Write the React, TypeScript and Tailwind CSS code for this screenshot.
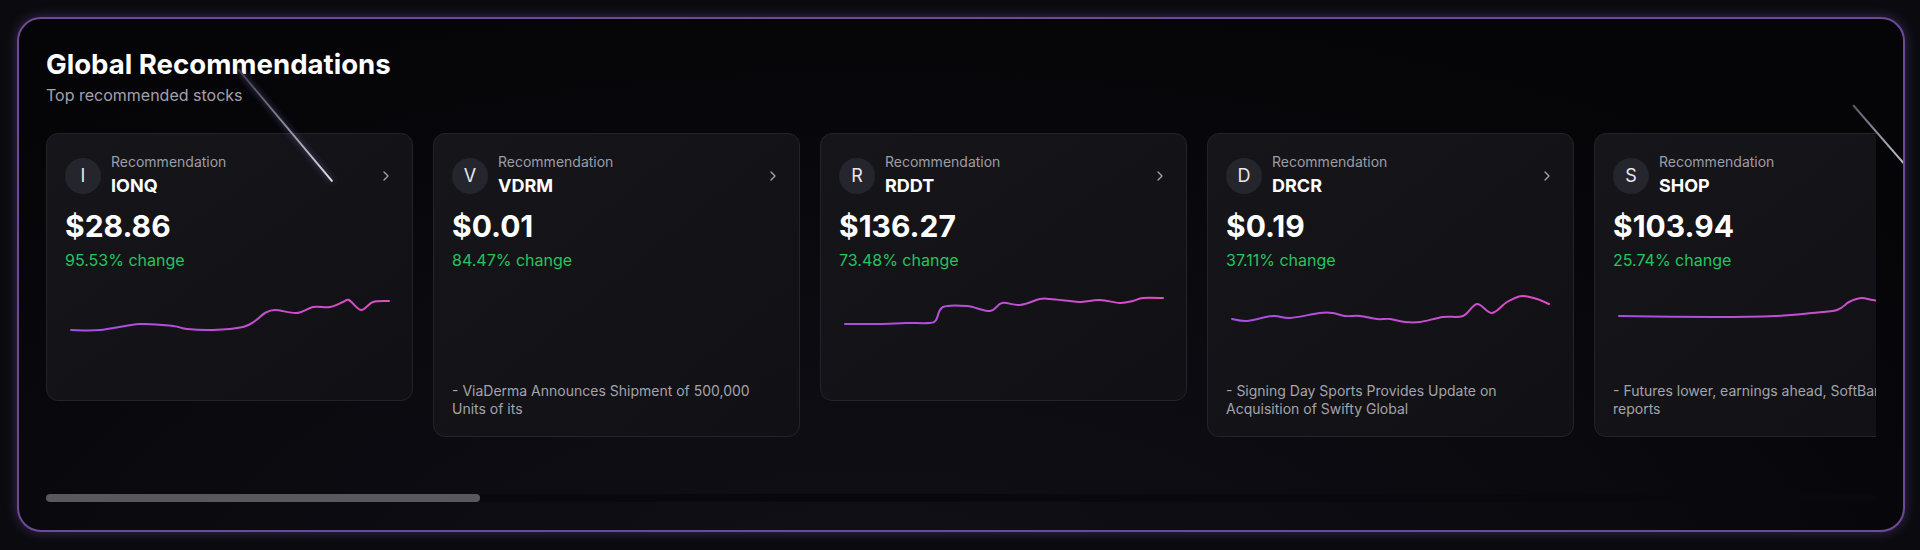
import { ChevronRight } from "lucide-react";

type Pt = [number, number];

type Rec = {
  ticker: string;
  price: string;
  change: string;
  points: Pt[];
  news?: string;
};

const RECS: Rec[] = [
  {
    ticker: "IONQ",
    price: "$28.86",
    change: "95.53% change",
    points: [
      [6, 58], [35, 58], [75, 52], [108, 54], [122, 57], [148, 58], [178, 55], [190, 49],
      [200, 41], [210, 38], [232, 41], [248, 35], [265, 35], [278, 30], [284, 28], [296, 38],
      [308, 30], [324, 29],
    ],
  },
  {
    ticker: "VDRM",
    price: "$0.01",
    change: "84.47% change",
    points: [],
    news: "- ViaDerma Announces Shipment of 500,000 Units of its",
  },
  {
    ticker: "RDDT",
    price: "$136.27",
    change: "73.48% change",
    points: [
      [6, 52], [40, 52], [67, 51], [90, 51], [97, 48], [104, 35], [128, 34], [151, 39],
      [163, 31], [181, 33], [201, 27], [211, 27], [231, 29], [241, 30], [261, 28], [281, 31],
      [294, 29], [304, 26], [324, 26],
    ],
  },
  {
    ticker: "DRCR",
    price: "$0.19",
    change: "37.11% change",
    points: [
      [6, 47], [21, 49], [47, 44], [64, 46], [94, 41], [107, 41], [119, 44], [134, 44],
      [151, 47], [164, 47], [179, 50], [194, 50], [217, 45], [237, 44], [251, 32], [266, 41],
      [281, 30], [296, 24], [311, 27], [323, 32],
    ],
    news: "- Signing Day Sports Provides Update on Acquisition of Swifty Global",
  },
  {
    ticker: "SHOP",
    price: "$103.94",
    change: "25.74% change",
    points: [
      [6, 44], [101, 45], [163, 44], [199, 41], [224, 38], [236, 30], [248, 26], [260, 28],
      [277, 30], [297, 28], [323, 31],
    ],
    news: "- Futures lower, earnings ahead, SoftBank stake reports",
  },
];

// smooth path through points (catmull-rom -> bezier)
function smoothPath(pts: Pt[]) {
  if (pts.length < 2) return "";
  let d = `M${pts[0][0]},${pts[0][1]}`;
  for (let i = 0; i < pts.length - 1; i++) {
    const p0 = pts[i - 1] || pts[i];
    const p1 = pts[i];
    const p2 = pts[i + 1];
    const p3 = pts[i + 2] || p2;
    const c1x = p1[0] + (p2[0] - p0[0]) / 6;
    const c1y = p1[1] + (p2[1] - p0[1]) / 6;
    const c2x = p2[0] - (p3[0] - p1[0]) / 6;
    const c2y = p2[1] - (p3[1] - p1[1]) / 6;
    d += ` C${c1x},${c1y} ${c2x},${c2y} ${p2[0]},${p2[1]}`;
  }
  return d;
}

function Sparkline({ points, id }: { points: Pt[]; id: string }) {
  return (
    <div className="h-[110px] w-full">
      {points.length > 0 && (
        <svg width="329" height="110" viewBox="0 0 329 110" fill="none">
          <defs>
            <linearGradient id={id} x1="0" y1="0" x2="329" y2="0" gradientUnits="userSpaceOnUse">
              <stop offset="0%" stopColor="#a24fe6" />
              <stop offset="100%" stopColor="#e04cc4" />
            </linearGradient>
          </defs>
          <path
            d={smoothPath(points)}
            stroke={`url(#${id})`}
            strokeWidth="2"
            strokeLinecap="round"
            strokeLinejoin="round"
          />
        </svg>
      )}
    </div>
  );
}

function RecCard({ rec }: { rec: Rec }) {
  return (
    <div className="w-[367px] shrink-0 rounded-xl border border-[#232329] bg-[#121217] bg-gradient-to-br from-[#15151a] to-[#111115] p-[18px]">
      <div className="flex items-center justify-between">
        <div className="flex items-center gap-2.5">
          <div className="flex h-9 w-9 items-center justify-center rounded-full bg-[#25252d] text-lg text-[#e8e8ec]">
            {rec.ticker[0]}
          </div>
          <div>
            <p className="text-sm leading-5 text-[#9d9da6]">Recommendation</p>
            <p className="text-lg leading-7 font-bold text-white">{rec.ticker}</p>
          </div>
        </div>
        <ChevronRight size={16} className="text-[#a1a1aa]" />
      </div>
      <p className="mt-2 text-3xl leading-9 font-bold text-white">{rec.price}</p>
      <p className="mt-1 text-base leading-6 text-[#22c55e]">{rec.change}</p>
      <Sparkline points={rec.points} id={`grad-${rec.ticker}`} />
      {rec.news && <p className="text-sm leading-[18px] text-[#a3a3ab]">{rec.news}</p>}
    </div>
  );
}

export default function App() {
  return (
    <div
      className="h-[550px] w-[1920px] overflow-hidden bg-[#0b0b0f] pl-[17px] pr-[15px] pt-[17px]"
      style={{ fontFamily: "Inter, 'Noto Sans', sans-serif" }}
    >
      <section className="relative overflow-hidden rounded-3xl border-2 border-[#6c4a98] bg-[#06060a] bg-[radial-gradient(ellipse_70%_120%_at_45%_115%,#101016_0%,#0a0a0f_55%,#050508_100%)] px-[27px] pt-[28px] pb-[28px] shadow-[0_0_12px_rgba(130,90,190,0.4)]">
        <h2 className="text-[27.6px] leading-[34px] font-bold text-white">Global Recommendations</h2>
        <p className="mt-0.5 text-base leading-6 text-[#a1a1aa]">Top recommended stocks</p>

        <div className="mt-[26px] flex items-start gap-5 overflow-hidden">
          {RECS.map((r) => (
            <RecCard key={r.ticker} rec={r} />
          ))}
        </div>

        <div className="mt-[57px] h-2 w-full rounded-full bg-[#09090d]">
          <div className="h-2 w-[434px] rounded-full bg-[#58585d]" />
        </div>

        {/* meteors */}
        <div className="pointer-events-none absolute left-[219px] top-[49px] h-[2px] w-[147px] origin-left rotate-[50deg] rounded-full bg-gradient-to-r from-[#3c3c4c] via-[#8a8a9c] to-[#e2e2ee] shadow-[0_0_6px_rgba(190,170,255,0.5)]" />
        <div className="pointer-events-none absolute left-[1834px] top-[85px] h-[2px] w-[100px] origin-left rotate-[49deg] rounded-full bg-gradient-to-r from-[#55556a] via-[#a0a0b0] to-[#d8d8e6]" />
      </section>
    </div>
  );
}
